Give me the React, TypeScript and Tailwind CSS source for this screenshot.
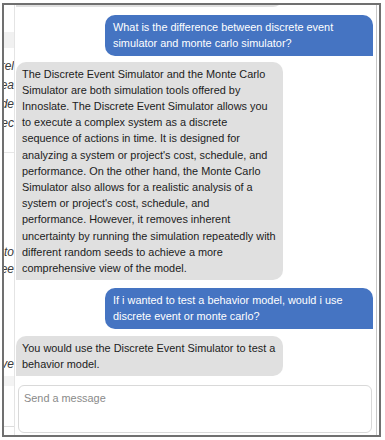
import React from "react";

type Msg = { role: "user" | "assistant"; lines: string[]; mt: string };

const messages: Msg[] = [
  {
    role: "assistant",
    mt: "mt-0",
    lines: [
      "Innoslate is a model-based systems engineering tool",
      "that lets you capture requirements, build models and",
      "verify them through simulation in one place.",
    ],
  },
  {
    role: "user",
    mt: "mt-[8px]",
    lines: ["What is the difference between discrete event", "simulator and monte carlo simulator?"],
  },
  {
    role: "assistant",
    mt: "mt-[6px]",
    lines: [
      "The Discrete Event Simulator and the Monte Carlo",
      "Simulator are both simulation tools offered by",
      "Innoslate. The Discrete Event Simulator allows you",
      "to execute a complex system as a discrete",
      "sequence of actions in time. It is designed for",
      "analyzing a system or project's cost, schedule, and",
      "performance. On the other hand, the Monte Carlo",
      "Simulator also allows for a realistic analysis of a",
      "system or project's cost, schedule, and",
      "performance. However, it removes inherent",
      "uncertainty by running the simulation repeatedly with",
      "different random seeds to achieve a more",
      "comprehensive view of the model.",
    ],
  },
  {
    role: "user",
    mt: "mt-[8px]",
    lines: ["If i wanted to test a behavior model, would i use", "discrete event or monte carlo?"],
  },
  {
    role: "assistant",
    mt: "mt-[7px]",
    lines: ["You would use the Discrete Event Simulator to test a", "behavior model."],
  },
];

function Lines({ lines }: { lines: string[] }) {
  return (
    <>
      {lines.map((l, i) => (
        <React.Fragment key={i}>
          {i > 0 && <br />}
          {l}
        </React.Fragment>
      ))}
    </>
  );
}

function Bubble({ m }: { m: Msg }) {
  if (m.role === "user") {
    return (
      <div
        className={`${m.mt} shrink-0 self-end w-[268px] bg-[#4574c2] text-white rounded-[10px] rounded-br-none px-[8px] py-[4px] text-[10.9px] leading-[16.2px] whitespace-nowrap`}
      >
        <Lines lines={m.lines} />
      </div>
    );
  }
  return (
    <div
      className={`${m.mt} shrink-0 self-start w-[267px] bg-[#e0e0e0] text-[#1c1c1c] rounded-[10px] rounded-bl-none pl-[6px] pr-[4px] py-[4px] text-[10.9px] leading-[16.2px] whitespace-nowrap overflow-hidden`}
    >
      <Lines lines={m.lines} />
    </div>
  );
}

function Frag({ text, h, mt }: { text: string; h: string; mt: string }) {
  return (
    <div className={`${mt} ${h} flex justify-end items-center overflow-hidden whitespace-nowrap italic text-[12px] text-[#3a3a3a]`}>
      <span>{text}</span>
    </div>
  );
}

function LeftStrip() {
  return (
    <div className="w-[11px] shrink-0 border-r border-[#e4e4e4] overflow-hidden flex flex-col">
      <div className="h-[27px]" />
      <div className="h-[16px] bg-[#f1f1f1]" />
      <Frag mt="mt-[8px]" h="h-[19px]" text="correl" />
      <Frag mt="mt-0" h="h-[19px]" text="area" />
      <Frag mt="mt-0" h="h-[19px]" text="mode" />
      <Frag mt="mt-0" h="h-[19px]" text="direc" />
      <div className="mt-[20px] h-[1px] bg-[#e6e6e6]" />
      <Frag mt="mt-[90px]" h="h-[17px]" text="to" />
      <Frag mt="mt-0" h="h-[17px]" text="see" />
      <Frag mt="mt-[78px]" h="h-[17px]" text="have" />
      <div className="mt-[4px] h-[10px] bg-[#f3f3f3]" />
      <div className="mt-[40px] h-[1px] bg-[#dcdcdc]" />
    </div>
  );
}

export default function App() {
  return (
    <div className="w-[385px] h-[440px] bg-white pt-[3px] pl-[2px] font-['Liberation_Sans',Arial,sans-serif] overflow-hidden">
      <div className="w-[379px] h-[434px] border-2 border-[#707070] flex bg-white">
        <LeftStrip />
        <div className="w-[362px] shrink-0 flex flex-col border-r border-[#c8c8c8]">
          <div className="flex-1 min-h-0 overflow-hidden flex flex-col justify-end pl-[1px] pr-[3px]">
            {messages.map((m, i) => (
              <Bubble key={i} m={m} />
            ))}
          </div>
          <div className="pt-[9px] pb-[2px] pl-[3px] pr-[4px]">
            <textarea
              className="block w-full h-[48px] resize-none border border-[#d9d9d9] rounded-[6px] pl-[5px] pt-[4px] text-[10.9px] leading-[16.2px] text-[#222] placeholder:text-[#8a8a8a] outline-none font-['Liberation_Sans',Arial,sans-serif]"
              placeholder="Send a message"
            />
          </div>
        </div>
        <div className="w-[2px] shrink-0" />
      </div>
    </div>
  );
}
